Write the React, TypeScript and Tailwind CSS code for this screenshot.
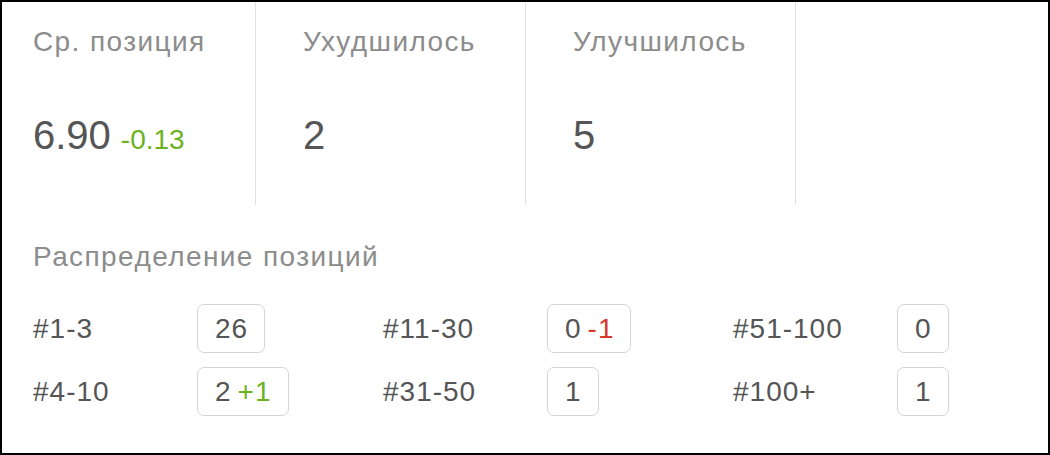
import React from "react";

type Cell = { label: string; value: string; delta?: string; deltaColor?: string };

const cells: Cell[] = [
  { label: "#1-3", value: "26" },
  { label: "#11-30", value: "0", delta: "-1", deltaColor: "text-[#d8392b]" },
  { label: "#51-100", value: "0" },
  { label: "#4-10", value: "2", delta: "+1", deltaColor: "text-[#6cb21f]" },
  { label: "#31-50", value: "1" },
  { label: "#100+", value: "1" },
];

function Stat({ title, children, last }: { title: string; children: React.ReactNode; last?: boolean }) {
  return (
    <div className={"w-[223px] h-full border-r border-[#e2e2e2] " + (last ? "" : "mr-[47px]")}>
      <div className="pt-[25px] text-[28px] leading-[30px] tracking-[1.4px] text-[#8c8c8c]">{title}</div>
      <div className="mt-[58px] flex items-baseline gap-[10px] text-[#555555]">{children}</div>
    </div>
  );
}

export default function App() {
  return (
    <div className="w-[1050px] h-[455px] border-2 border-black bg-white font-['Liberation_Sans',Arial,sans-serif]">
      <div className="flex h-[203px] pl-[31px]">
        <Stat title="Ср. позиция">
          <span className="text-[40px] leading-[40px]">6.90</span>
          <span className="text-[28px] leading-[28px] text-[#6cb21f]">-0.13</span>
        </Stat>
        <Stat title="Ухудшилось">
          <span className="text-[40px] leading-[40px]">2</span>
        </Stat>
        <Stat title="Улучшилось" last>
          <span className="text-[40px] leading-[40px]">5</span>
        </Stat>
      </div>
      <div className="pl-[31px]">
        <div className="pt-[37px] text-[28px] leading-[30px] tracking-[1.4px] text-[#8c8c8c]">Распределение позиций</div>
        <div className="mt-[32px] grid grid-cols-[350px_350px_300px] gap-y-[14px]">
          {cells.map((c) => (
            <div key={c.label} className="flex items-center">
              <div className="w-[164px] text-[28px] leading-[32px] tracking-[1px] text-[#555555]">{c.label}</div>
              <div className="h-[49px] flex items-center pl-[17px] pr-[16px] border border-[#d4d4d4] rounded-[7px] text-[28px] leading-[32px] tracking-[1px] text-[#555555]">
                <span>{c.value}</span>
                {c.delta && <span className={"ml-[6px] " + c.deltaColor}>{c.delta}</span>}
              </div>
            </div>
          ))}
        </div>
      </div>
    </div>
  );
}
